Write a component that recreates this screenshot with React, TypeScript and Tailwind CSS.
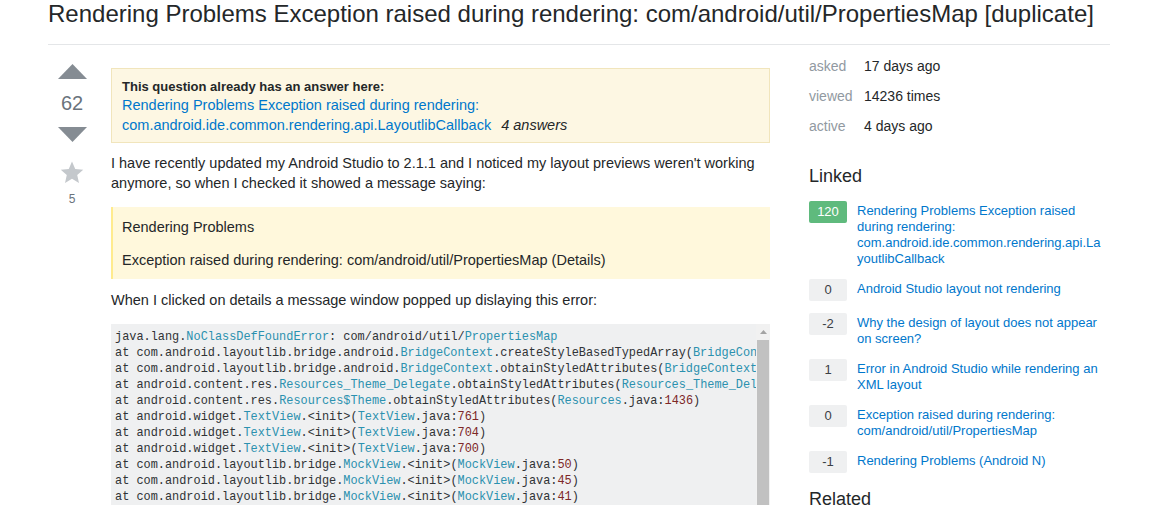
import React from 'react'

type Tok = [string, 'p' | 't' | 'n']

const codeLines: Tok[][] = [
  [['java.lang.', 'p'], ['NoClassDefFoundError', 't'], [': com/android/util/', 'p'], ['PropertiesMap', 't']],
  [['at com.android.layoutlib.bridge.android.', 'p'], ['BridgeContext', 't'], ['.createStyleBasedTypedArray(', 'p'], ['BridgeContext', 't'], ['.java:', 'p'], ['1135', 'n'], [')', 'p']],
  [['at com.android.layoutlib.bridge.android.', 'p'], ['BridgeContext', 't'], ['.obtainStyledAttributes(', 'p'], ['BridgeContext', 't'], ['.java:', 'p'], ['790', 'n'], [')', 'p']],
  [['at android.content.res.', 'p'], ['Resources_Theme_Delegate', 't'], ['.obtainStyledAttributes(', 'p'], ['Resources_Theme_Delegate', 't'], ['.java:', 'p'], ['71', 'n'], [')', 'p']],
  [['at android.content.res.', 'p'], ['Resources$Theme', 't'], ['.obtainStyledAttributes(', 'p'], ['Resources', 't'], ['.java:', 'p'], ['1436', 'n'], [')', 'p']],
  [['at android.widget.', 'p'], ['TextView', 't'], ['.<init>(', 'p'], ['TextView', 't'], ['.java:', 'p'], ['761', 'n'], [')', 'p']],
  [['at android.widget.', 'p'], ['TextView', 't'], ['.<init>(', 'p'], ['TextView', 't'], ['.java:', 'p'], ['704', 'n'], [')', 'p']],
  [['at android.widget.', 'p'], ['TextView', 't'], ['.<init>(', 'p'], ['TextView', 't'], ['.java:', 'p'], ['700', 'n'], [')', 'p']],
  [['at com.android.layoutlib.bridge.', 'p'], ['MockView', 't'], ['.<init>(', 'p'], ['MockView', 't'], ['.java:', 'p'], ['50', 'n'], [')', 'p']],
  [['at com.android.layoutlib.bridge.', 'p'], ['MockView', 't'], ['.<init>(', 'p'], ['MockView', 't'], ['.java:', 'p'], ['45', 'n'], [')', 'p']],
  [['at com.android.layoutlib.bridge.', 'p'], ['MockView', 't'], ['.<init>(', 'p'], ['MockView', 't'], ['.java:', 'p'], ['41', 'n'], [')', 'p']],
  [['at com.android.layoutlib.bridge.', 'p'], ['MockView', 't'], ['.<init>(', 'p'], ['MockView', 't'], ['.java:', 'p'], ['37', 'n'], [')', 'p']],
]

const linked = [
  { score: '120', accepted: true, title: 'Rendering Problems Exception raised during rendering: com.android.ide.common.rendering.api.LayoutlibCallback' },
  { score: '0', title: 'Android Studio layout not rendering' },
  { score: '-2', title: 'Why the design of layout does not appear on screen?' },
  { score: '1', title: 'Error in Android Studio while rendering an XML layout' },
  { score: '0', title: 'Exception raised during rendering: com/android/util/PropertiesMap' },
  { score: '-1', title: 'Rendering Problems (Android N)' },
]

function VoteColumn() {
  return (
    <div className="w-[48px] shrink-0 flex flex-col items-center pt-[19px]">
      <svg width="29" height="15" viewBox="0 0 29 15"><path d="M0 15 L14.5 0 L29 15 Z" fill="#858c93" /></svg>
      <div className="mt-[12px] text-[20px] leading-[24px] text-[#6a737c]">62</div>
      <svg className="mt-[12px]" width="29" height="15" viewBox="0 0 29 15"><path d="M0 0 L29 0 L14.5 15 Z" fill="#858c93" /></svg>
      <svg className="mt-[18px]" width="26" height="25" viewBox="0 0 24 24">
        <path d="M12 1.5 L15.1 8.6 L22.8 9.3 L17 14.4 L18.7 22 L12 18 L5.3 22 L7 14.4 L1.2 9.3 L8.9 8.6 Z" fill="#c4c8cc" />
      </svg>
      <div className="mt-[6px] text-[12px] leading-[16px] text-[#6a737c]">5</div>
    </div>
  )
}

function CodeBlock() {
  return (
    <div className="mt-[14px] flex bg-[#eff0f1]">
      <pre className="flex-1 overflow-hidden pl-[4px] pt-[5px] pb-[4px] font-['Liberation_Mono',monospace] text-[11.9px] leading-[16px] text-[#303336]">
        {codeLines.map((line, i) => (
          <div key={i} className="whitespace-pre">
            {line.map(([txt, k], j) => (
              <span key={j} className={k === 't' ? 'text-[#2b91af]' : k === 'n' ? 'text-[#7d2727]' : 'text-[#303336]'}>{txt}</span>
            ))}
          </div>
        ))}
      </pre>
      <div className="w-[14px] shrink-0 flex flex-col bg-[#f1f1f1]">
        <div className="h-[16px] flex items-center justify-center">
          <svg width="7" height="4" viewBox="0 0 7 4"><path d="M0 4 L3.5 0 L7 4 Z" fill="#a3a3a3" /></svg>
        </div>
        <div className="flex-1 mx-px bg-[#c1c1c1]" />
      </div>
    </div>
  )
}

function Sidebar() {
  return (
    <div className="w-[301px] shrink-0 pt-[12px]">
      <div className="flex flex-col gap-[12px] text-[14px] leading-[18px]">
        {[['asked', '17 days ago'], ['viewed', '14236 times'], ['active', '4 days ago']].map(([k, v]) => (
          <div key={k} className="flex">
            <span className="w-[55px] text-[#9199a1]">{k}</span>
            <span className="text-[#242729]">{v}</span>
          </div>
        ))}
      </div>
      <h4 className="mt-[30px] text-[18px] leading-[22px] text-[#242729]">Linked</h4>
      <div className="mt-[14px] flex flex-col gap-[12px]">
        {linked.map((l, i) => (
          <div key={i} className="flex gap-[10px]">
            <div
              className={
                l.accepted
                  ? 'w-[38px] h-[22px] shrink-0 rounded-[2px] bg-[#5fba7d] text-white text-[13px] leading-[22px] text-center'
                  : 'w-[38px] h-[22px] shrink-0 rounded-[2px] bg-[#eff0f1] text-[#3b4045] text-[13px] leading-[22px] text-center'
              }
            >
              {l.score}
            </div>
            <a className="w-[250px] pt-[2px] break-words text-[13px] leading-[16px] text-[#0077cc]">{l.title}</a>
          </div>
        ))}
      </div>
      <h4 className="mt-[15px] text-[18px] leading-[22px] text-[#242729]">Related</h4>
    </div>
  )
}

export default function App() {
  return (
    <div className="w-[1149px] h-[505px] overflow-hidden bg-white font-['Liberation_Sans',Arial,sans-serif] text-[#242729]">
      <div className="ml-[48px] w-[1062px]">
        <div className="pb-[16px] border-b border-[#e4e6e8]">
          <h1 className="text-[24px] leading-[28px] text-[#242729]">
            Rendering Problems Exception raised during rendering: com/android/util/PropertiesMap [duplicate]
          </h1>
        </div>
        <div className="flex">
          <VoteColumn />
          <div className="w-[659px] shrink-0 ml-[15px] pt-[23px]">
            <div className="border border-[#f1e5bc] bg-[#fdf7e3] pl-[10px] pr-[10px] pt-[9px] pb-[7px]">
              <div className="text-[13px] leading-[17px] font-bold text-[#242729]">This question already has an answer here:</div>
              <div className="text-[14.5px] leading-[20px]">
                <a className="text-[#0077cc]">Rendering Problems Exception raised during rendering: com.android.ide.common.rendering.api.LayoutlibCallback</a>
                <span className="ml-[10px] italic text-[#242729]">4 answers</span>
              </div>
            </div>
            <p className="mt-[10px] text-[14.5px] leading-[20px]">
              I have recently updated my Android Studio to 2.1.1 and I noticed my layout previews weren't working anymore, so when I checked it showed a message saying:
            </p>
            <blockquote className="mt-[14px] border-l-2 border-[#ffeb8e] bg-[#fff8dc] pl-[9px] pt-[10px] pb-[9px] text-[14.5px] leading-[20px]">
              <p>Rendering Problems</p>
              <p className="mt-[13px]">Exception raised during rendering: com/android/util/PropertiesMap (Details)</p>
            </blockquote>
            <p className="mt-[11px] text-[14.5px] leading-[20px]">When I clicked on details a message window popped up dislaying this error:</p>
            <CodeBlock />
          </div>
          <div className="ml-[39px]">
            <Sidebar />
          </div>
        </div>
      </div>
    </div>
  )
}
